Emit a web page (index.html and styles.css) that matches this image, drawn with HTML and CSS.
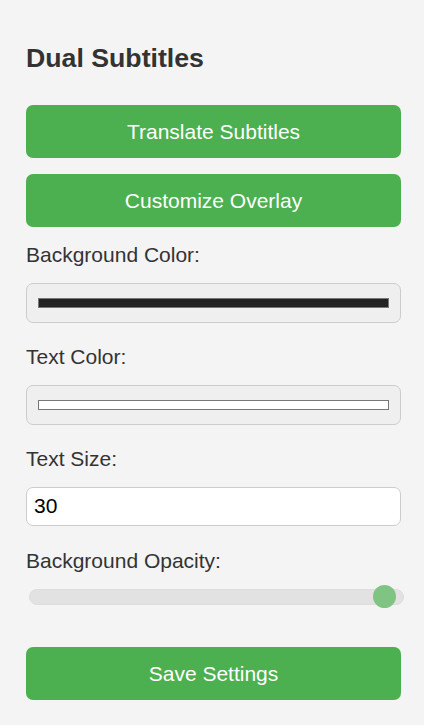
FILE: index.html
```html
<!DOCTYPE html>
<html>
<head>
<meta charset="utf-8">
<link rel="stylesheet" href="styles.css">
</head>
<body>
<div class="panel">
  <h2 class="title">Dual Subtitles</h2>
  <button class="btn btn-first">Translate Subtitles</button>
  <button class="btn">Customize Overlay</button>
  <label class="label label-first">Background Color:</label>
  <div class="color-field"><div class="swatch swatch-dark"></div></div>
  <label class="label">Text Color:</label>
  <div class="color-field"><div class="swatch swatch-light"></div></div>
  <label class="label">Text Size:</label>
  <input class="text-input" type="text" value="30">
  <label class="label label-last">Background Opacity:</label>
  <div class="slider">
    <div class="track"></div>
    <div class="thumb" style="left: 343.5px"></div>
  </div>
  <button class="btn btn-save">Save Settings</button>
</div>
</body>
</html>
```
FILE: styles.css
```css
html, body {
  margin: 0;
  padding: 0;
  background: #f4f4f4;
}
body {
  font-family: "Liberation Sans", Arial, sans-serif;
  color: #333;
}
.panel {
  width: 375px;
  margin-left: 26px;
  padding-top: 43px;
  display: flex;
  flex-direction: column;
}
.title {
  margin: 0;
  font-size: 26.7px;
  font-weight: bold;
  line-height: 31px;
  color: #333;
}
.btn {
  height: 53px;
  border: none;
  border-radius: 7px;
  background: #4caf50;
  color: #fff;
  font-family: "Liberation Sans", Arial, sans-serif;
  font-size: 21px;
  padding: 0;
  margin-top: 16px;
}
.btn-first {
  margin-top: 31px;
}
.label {
  display: block;
  font-size: 21px;
  line-height: 24px;
  color: #333;
  margin-top: 22.5px;
  margin-bottom: 15.5px;
}
.label-first {
  margin-top: 16px;
}
.label-last {
  margin-top: 23.5px;
}
.color-field {
  box-sizing: border-box;
  height: 40px;
  border: 1px solid #ccc;
  border-radius: 7px;
  background: #efefef;
  padding: 14px 11px 0 11px;
}
.swatch {
  box-sizing: border-box;
  height: 10px;
  border: 1px solid #777;
}
.swatch-dark {
  background: #222;
}
.swatch-light {
  background: #fff;
}
.text-input {
  box-sizing: border-box;
  height: 39px;
  border: 1px solid #ccc;
  border-radius: 7px;
  background: #fff;
  padding: 0 7px;
  font-family: "Liberation Sans", Arial, sans-serif;
  font-size: 21px;
  color: #000;
  margin: 0;
  outline: none;
}
.slider {
  position: relative;
  height: 24px;
  margin-left: 3px;
  width: 375px;
  margin-top: -4px;
}
.track {
  position: absolute;
  left: 0;
  right: 0;
  top: 4px;
  height: 16px;
  box-sizing: border-box;
  border: 1px solid #ddd;
  border-radius: 8px;
  background: #e2e2e2;
}
.thumb {
  position: absolute;
  top: 0.5px;
  width: 23px;
  height: 23px;
  border-radius: 50%;
  background: #80c483;
}
.btn-save {
  margin-top: 38.5px;
}
```
